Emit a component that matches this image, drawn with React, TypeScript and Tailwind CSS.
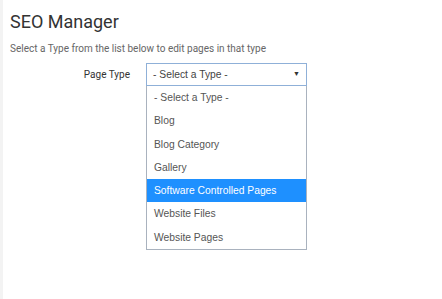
const options = [
  '- Select a Type -',
  'Blog',
  'Blog Category',
  'Gallery',
  'Software Controlled Pages',
  'Website Files',
  'Website Pages',
];

export default function App() {
  const active = 'Software Controlled Pages';

  return (
    <div className="flex h-[299px] w-[442px] bg-white">
      <div className="w-[3px] bg-[#f3f3f3]" />
      <div className="flex-1 pl-[7px] pt-[10px]">
        <h1 className="font-['Roboto',sans-serif] text-[18px] leading-[24px] text-[#333]">SEO Manager</h1>
        <p className="mt-[8px] font-['Roboto',sans-serif] text-[10px] leading-[14px] text-[#666]">
          Select a Type from the list below to edit pages in that type
        </p>

        <div className="mt-[7px] flex items-start">
          <label className="w-[136px] pr-[16px] pt-[5px] text-right font-['Roboto',sans-serif] text-[10px] leading-[14px] text-[#333]">
            Page Type
          </label>
          <div className="w-[161px] font-['Liberation_Sans',Arial,sans-serif] text-[10.3px]">
            <div className="flex h-[23px] items-center justify-between border border-[#8fb0d8] bg-white pl-[6px] pr-[6px] text-[#444]">
              <span>- Select a Type -</span>
              <span className="text-[7px] text-[#333]">▼</span>
            </div>
            <ul className="border border-t-0 border-[#a9b2be] bg-white">
              {options.map((o) => (
                <li
                  key={o}
                  className={
                    o === active
                      ? 'flex h-[23.3px] items-center bg-[#1e90ff] pl-[7px] text-white'
                      : 'flex h-[23.3px] items-center pl-[7px] text-[#555]'
                  }
                >
                  {o}
                </li>
              ))}
            </ul>
          </div>
        </div>
      </div>
    </div>
  );
}
